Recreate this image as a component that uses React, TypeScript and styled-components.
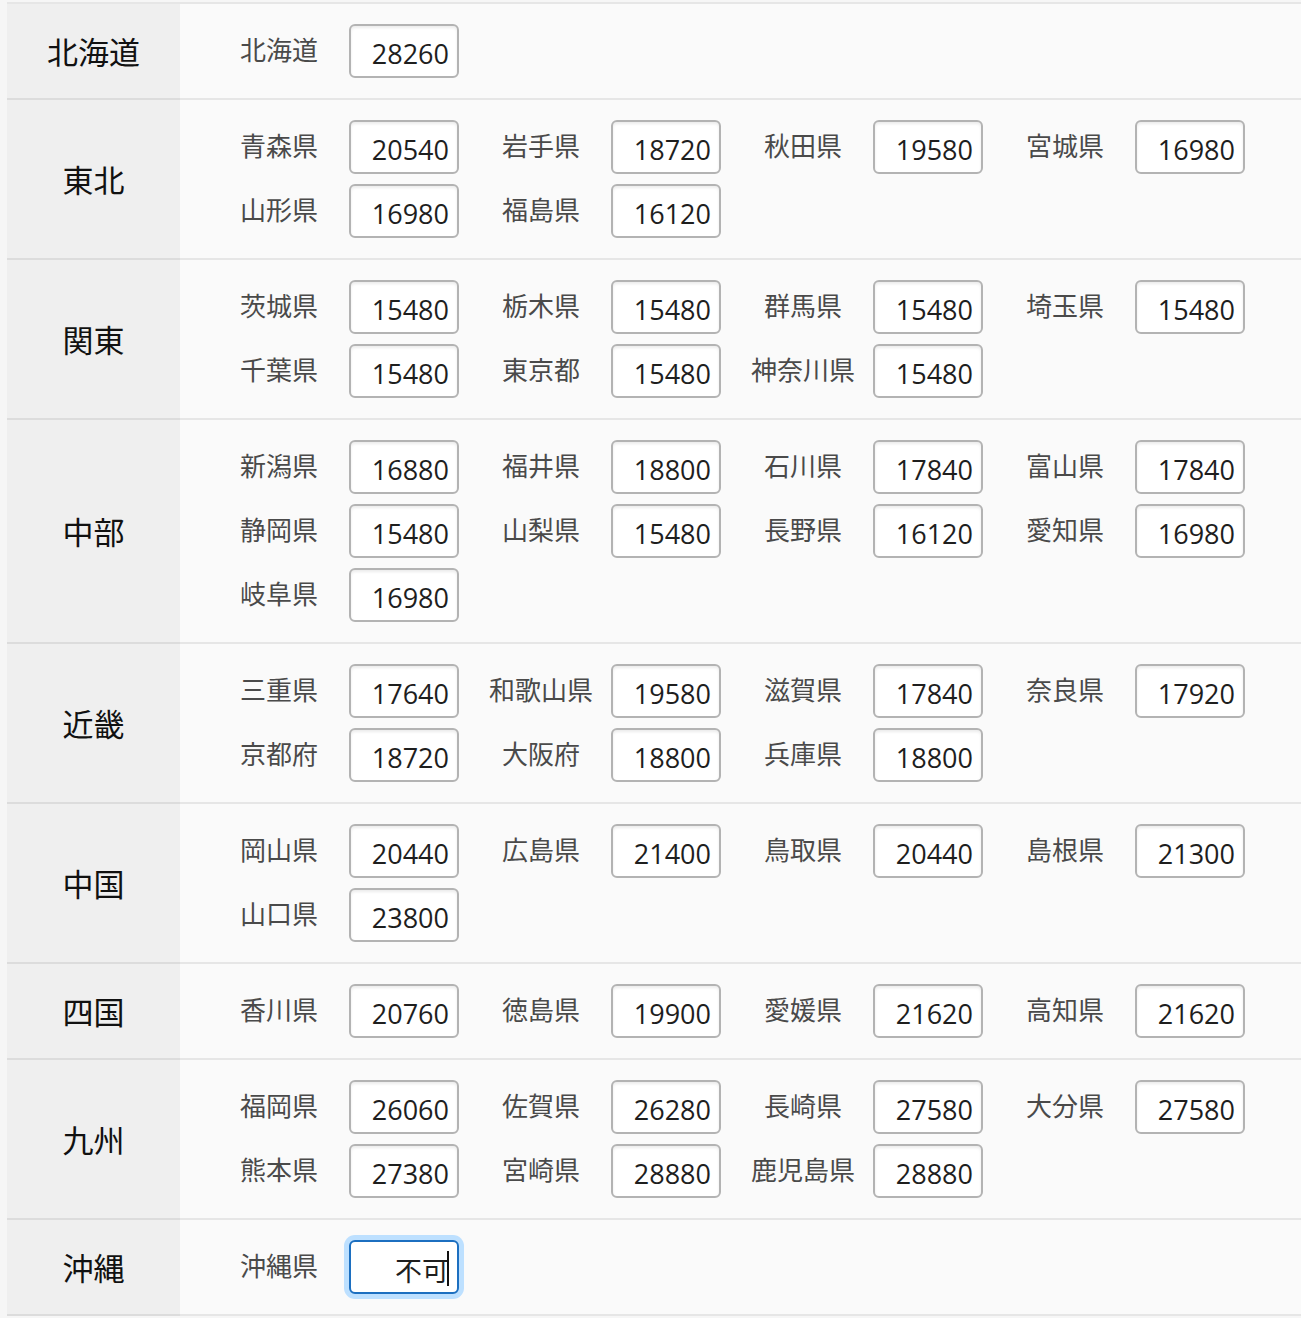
import * as React from 'react';
import styled, { createGlobalStyle } from 'styled-components';

const Global = createGlobalStyle`
    html, body {
        margin: 0;
        padding: 0;
        background: #f6f6f6;
    }
    body {
        font-family: 'Noto Sans CJK JP', 'Noto Sans', sans-serif;
    }
`;

const Table = styled.div`
    margin: 2px 0 0 7px;
    border-top: 2px solid #e6e6e6;
`;

const Row = styled.div`
    display: flex;
`;

const RegionHead = styled.div`
    width: 173px;
    flex: none;
    background: #efefef;
    border-bottom: 2px solid #dcdcdc;
    display: flex;
    align-items: center;
    justify-content: center;
    font-size: 31px;
    font-weight: 400;
    color: #111;
    padding-bottom: 2px;
    box-sizing: border-box;
`;

const Cells = styled.div`
    flex: 1;
    background: #fafafa;
    border-bottom: 2px solid #e6e6e6;
    padding: 20px 0 20px 34px;
    display: grid;
    grid-template-columns: repeat(4, 262px);
    row-gap: 10px;
`;

const Cell = styled.div`
    display: flex;
    align-items: center;
`;

const Label = styled.span`
    width: 130px;
    text-align: center;
    font-size: 26px;
    color: #4a4a4a;
    white-space: nowrap;
    padding-bottom: 5px;
`;

const Field = styled.div<{ $focused?: boolean }>`
    position: relative;
    margin-left: 5px;
    width: 110px;
    height: 54px;
    box-sizing: border-box;
    border: 2px solid ${(p) => (p.$focused ? '#1c6fc0' : '#b3b3b3')};
    border-radius: 6px;
    background: #fff;
    box-shadow: ${(p) =>
        p.$focused ? '0 0 0 5px #bde0ff' : 'inset 0 2px 3px rgba(0, 0, 0, 0.08)'};
`;

const Value = styled.input`
    width: 100%;
    height: 100%;
    box-sizing: border-box;
    border: none;
    outline: none;
    background: transparent;
    text-align: right;
    padding: 4px 8px 0 0;
    font-family: 'Open Sans', 'Noto Sans CJK JP', sans-serif;
    font-size: 27px;
    color: #1e1e1e;
    caret-color: transparent;
`;

const Caret = styled.span`
    position: absolute;
    right: 8px;
    top: 9px;
    width: 2px;
    height: 35px;
    background: #111;
`;

type Pref = [string, string];

const regions: { name: string; prefs: Pref[] }[] = [
    { name: '北海道', prefs: [['北海道', '28260']] },
    {
        name: '東北',
        prefs: [
            ['青森県', '20540'],
            ['岩手県', '18720'],
            ['秋田県', '19580'],
            ['宮城県', '16980'],
            ['山形県', '16980'],
            ['福島県', '16120'],
        ],
    },
    {
        name: '関東',
        prefs: [
            ['茨城県', '15480'],
            ['栃木県', '15480'],
            ['群馬県', '15480'],
            ['埼玉県', '15480'],
            ['千葉県', '15480'],
            ['東京都', '15480'],
            ['神奈川県', '15480'],
        ],
    },
    {
        name: '中部',
        prefs: [
            ['新潟県', '16880'],
            ['福井県', '18800'],
            ['石川県', '17840'],
            ['富山県', '17840'],
            ['静岡県', '15480'],
            ['山梨県', '15480'],
            ['長野県', '16120'],
            ['愛知県', '16980'],
            ['岐阜県', '16980'],
        ],
    },
    {
        name: '近畿',
        prefs: [
            ['三重県', '17640'],
            ['和歌山県', '19580'],
            ['滋賀県', '17840'],
            ['奈良県', '17920'],
            ['京都府', '18720'],
            ['大阪府', '18800'],
            ['兵庫県', '18800'],
        ],
    },
    {
        name: '中国',
        prefs: [
            ['岡山県', '20440'],
            ['広島県', '21400'],
            ['鳥取県', '20440'],
            ['島根県', '21300'],
            ['山口県', '23800'],
        ],
    },
    {
        name: '四国',
        prefs: [
            ['香川県', '20760'],
            ['徳島県', '19900'],
            ['愛媛県', '21620'],
            ['高知県', '21620'],
        ],
    },
    {
        name: '九州',
        prefs: [
            ['福岡県', '26060'],
            ['佐賀県', '26280'],
            ['長崎県', '27580'],
            ['大分県', '27580'],
            ['熊本県', '27380'],
            ['宮崎県', '28880'],
            ['鹿児島県', '28880'],
        ],
    },
    { name: '沖縄', prefs: [['沖縄県', '不可']] },
];

const App = () => {
    return (
        <>
            <Global />
            <Table>
                {regions.map((r) => (
                    <Row key={r.name}>
                        <RegionHead>{r.name}</RegionHead>
                        <Cells>
                            {r.prefs.map(([label, fee]) => {
                                const focused = label === '沖縄県';
                                return (
                                    <Cell key={label}>
                                        <Label>{label}</Label>
                                        <Field $focused={focused}>
                                            <Value type="text" defaultValue={fee} readOnly />
                                            {focused && <Caret />}
                                        </Field>
                                    </Cell>
                                );
                            })}
                        </Cells>
                    </Row>
                ))}
            </Table>
        </>
    );
};

export default App;
